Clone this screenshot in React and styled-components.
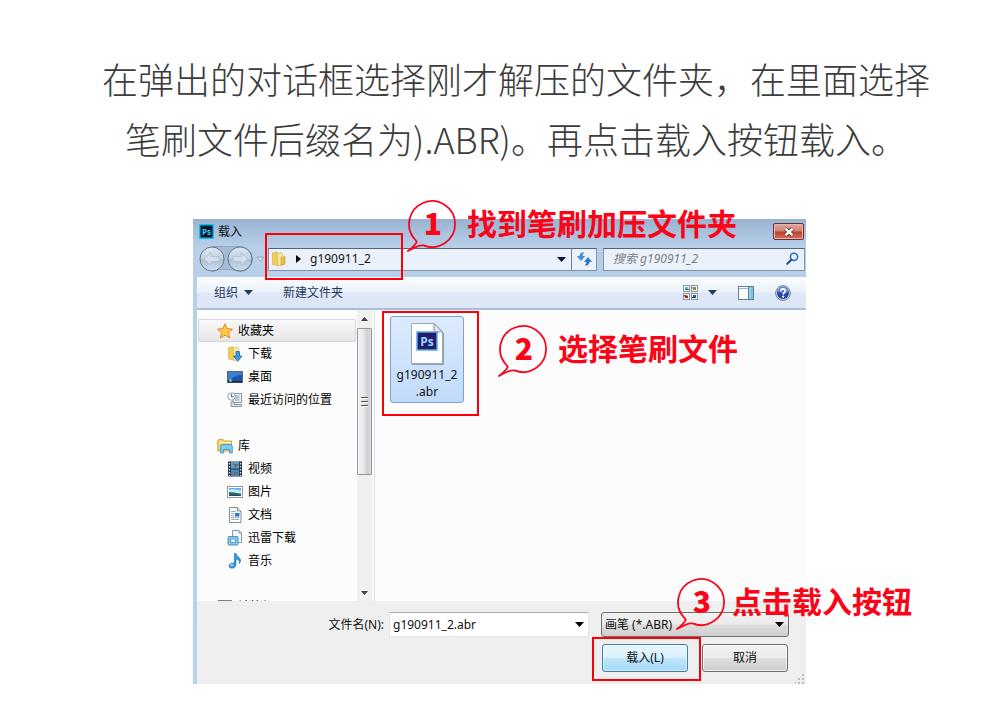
import React from 'react';
import styled, { createGlobalStyle, css } from 'styled-components';

const GlobalStyle = createGlobalStyle`
    *{
        box-sizing: border-box;
    }
    body{
        margin: 0;
        background: #fff;
        font-family: 'Noto Sans', 'Noto Sans CJK SC', sans-serif;
        font-size: 12px;
        line-height: 17px;
        color: #111;
    }
    button, input, select{
        font: inherit;
        color: inherit;
    }
    svg{
        display: block;
        flex: none;
    }
`;

const Arrow = ({ up, color = '#000' }) => (
    <svg width="9" height="5" viewBox="0 0 9 5" aria-hidden="true">
        <path d={up ? 'M0 5L4.5 0L9 5Z' : 'M0 0H9L4.5 5Z'} fill={color} />
    </svg>
);

const PsIcon = () => (
    <svg width="15" height="15" viewBox="0 0 15 15" aria-hidden="true">
        <rect x=".75" y=".75" width="13.5" height="13.5" fill="#06162c" stroke="#12bdf0" strokeWidth="1.5" />
        <text x="7.5" y="10.5" textAnchor="middle" fontFamily="Open Sans" fontWeight="700" fontSize="8" fill="#3cc8f5">Ps</text>
    </svg>
);

const HistoryIcon = () => (
    <svg width="66" height="28" viewBox="0 0 66 28" aria-hidden="true">
        <defs>
            <linearGradient id="orb" x1="0" y1="0" x2="0" y2="1">
                <stop offset="0" stopColor="#dfe9f3" />
                <stop offset=".48" stopColor="#c3d1e0" />
                <stop offset=".52" stopColor="#adc0d4" />
                <stop offset="1" stopColor="#cfe0f1" />
            </linearGradient>
        </defs>
        <path d="M14 1.5H42A12.5 12.5 0 0 1 42 26.5Q28 22 14 26.5Z" fill="#a4bcd6" stroke="#8ea6c0" />
        <circle cx="14" cy="14" r="12" fill="url(#orb)" stroke="#66788d" />
        <circle cx="42" cy="14" r="12" fill="url(#orb)" stroke="#66788d" />
        <path d="M6 14L13 7.500V11.500H21V16.500H13V20.500Z" fill="#d3dfec" stroke="#a9bbce" strokeWidth=".8" />
        <path d="M50 14L43 7.500V11.500H35V16.500H43V20.500Z" fill="#d3dfec" stroke="#a9bbce" strokeWidth=".8" />
        <path d="M59 12H65.500L62.300 16.500Z" fill="#dbe7f4" stroke="#8298b0" strokeWidth=".8" />
    </svg>
);

const FolderIcon = () => (
    <svg width="16" height="16" viewBox="0 0 16 16" aria-hidden="true">
        <path d="M1.500 2L6 1L7 2.500V14.500L1.500 13.500Z" fill="#f0cc58" stroke="#d3ab3c" strokeWidth=".6" />
        <path d="M6 3L10.500 1.500L11.500 3V13.500L7 15Z" fill="#fae89c" stroke="#d6b450" strokeWidth=".6" />
        <path d="M10 6.500L14 5.500V13L10 14.500Z" fill="#e8bd48" stroke="#c29a35" strokeWidth=".6" />
    </svg>
);

const RefreshIcon = () => (
    <svg width="15" height="14" viewBox="0 0 15 14" aria-hidden="true">
        <path d="M6.500 .8Q3 .5 2.800 4.500H.5L4 8.500L7.500 4.500H5.200Q5.200 2.500 6.500 .8Z" fill="#3f95dc" stroke="#1f66ae" strokeWidth=".5" />
        <path d="M8.500 13.200Q12 13.500 12.200 9.500H14.500L11 5.500L7.500 9.500H9.800Q9.800 11.500 8.500 13.200Z" fill="#2d78c4" stroke="#1f5a9c" strokeWidth=".5" />
    </svg>
);

const SearchIcon = () => (
    <svg width="13" height="13" viewBox="0 0 13 13" aria-hidden="true">
        <circle cx="8" cy="4.800" r="3.600" fill="#eef6fd" stroke="#2f72b3" strokeWidth="1.600" />
        <path d="M5.300 7.700L1.300 11.700" stroke="#23578f" strokeWidth="2.200" strokeLinecap="round" />
    </svg>
);

const ViewsIcon = () => (
    <svg width="15" height="15" viewBox="0 0 15 15" aria-hidden="true">
        <g fill="#fff" stroke="#8493a5">
            <rect x=".5" y=".5" width="6" height="6" />
            <rect x="8.500" y=".5" width="6" height="6" />
            <rect x=".5" y="8.500" width="6" height="6" />
            <rect x="8.500" y="8.500" width="6" height="6" />
        </g>
        <path d="M2 2H5V4H2Z" fill="#58b3dd" />
        <path d="M2 4H6V5H2Z" fill="#287236" />
        <path d="M9 2H13V5H10Z" fill="#6bac30" />
        <path d="M11 3H13V5H11Z" fill="#c7702d" />
        <path d="M1 10H5V13H2Z" fill="#a32020" />
        <path d="M3 10H5V11H3Z" fill="#e5a028" />
        <path d="M10 10H13V13H10Z" fill="#2459a8" />
        <path d="M9 12H12V13H9Z" fill="#222c46" />
    </svg>
);

const PaneIcon = () => (
    <svg width="16" height="14" viewBox="0 0 16 14" aria-hidden="true">
        <rect x=".5" y=".5" width="15" height="13" fill="#fff" stroke="#5f7f9e" />
        <path d="M1 2.500H10" stroke="#9fb4c8" />
        <rect x="10" y="1" width="5" height="12" fill="#79c1dc" />
        <path d="M10.500 1V13" stroke="#5f7f9e" />
        <path d="M12 2V12" stroke="#b9e3f0" />
    </svg>
);

const HelpIcon = () => (
    <svg width="16" height="16" viewBox="0 0 16 16" aria-hidden="true">
        <circle cx="8" cy="8" r="7.400" fill="#c9d2e2" stroke="#6d7789" strokeWidth=".9" />
        <circle cx="8" cy="8" r="6" fill="#2346a8" />
        <path d="M2.500 7A5.500 5.500 0 0 1 13.500 7Q8 9 2.500 7Z" fill="#5d83d4" />
        <path d="M5.600 6.100Q5.700 3.900 8 3.900Q10.400 3.900 10.400 5.900Q10.400 7 9.200 7.700Q8.200 8.300 8.200 9.500" fill="none" stroke="#fff" strokeWidth="1.700" />
        <circle cx="8.200" cy="11.700" r="1.100" fill="#fff" />
    </svg>
);

const icons = {
    star: (
        <path d="M8 .8L10.200 5.600L15.400 6.200L11.500 9.700L12.600 14.900L8 12.200L3.400 14.900L4.500 9.700L.6 6.200L5.800 5.600Z" fill="#fdcb40" stroke="#e4812a" strokeLinejoin="round" />
    ),
    download: (
        <>
            <path d="M1.500 1.500L6 .8L7 2V14L1.500 13Z" fill="#f0cc58" stroke="#d3ab3c" strokeWidth=".6" />
            <path d="M6 2.500L10.500 1L11.500 2.500V13.500L7 15Z" fill="#fae89c" stroke="#d6b450" strokeWidth=".6" />
            <path d="M9 5.500H12.500V10H15L10.800 15.300L6.500 10H9Z" fill="#3a9be4" stroke="#1c66b4" strokeWidth=".8" />
        </>
    ),
    desktop: (
        <>
            <rect x=".5" y="2.500" width="15" height="11" fill="#1e55a8" stroke="#51667f" />
            <path d="M1 3H15V6Q7 6 4 11H1Z" fill="#3f7dce" />
            <path d="M1 12H15V13.500H1Z" fill="#16294c" />
            <circle cx="3.500" cy="11.500" r="1.500" fill="#54c7a8" />
        </>
    ),
    recent: (
        <>
            <path d="M6 1.500H14.500V10.500H6Z" fill="#eef3f7" stroke="#8b959f" />
            <path d="M8 4H12.500M8 6H12.500M8 8H12.500" stroke="#829cb5" />
            <path d="M9.500 3V9M11.500 3V9" stroke="#b7cad9" strokeWidth=".7" />
            <circle cx="4.500" cy="4.500" r="3.800" fill="#f5f7f9" stroke="#9aa5b0" />
            <path d="M4.500 2V4.800H6.500" fill="none" stroke="#536375" />
            <path d="M4 10V14.500H14.500V12.500H7V10Z" fill="#dfe5e9" stroke="#8b959f" />
        </>
    ),
    library: (
        <>
            <path d="M.8 13V2.500L2 1.500H6L7 3H14.500V13Z" fill="#f2d566" stroke="#cfa93f" />
            <path d="M2 4.500H14" stroke="#fff6cc" />
            <path d="M3.500 15V8.500Q3.500 6.500 5.500 6.500H13Q15.300 6.500 15.300 8.500V15H12.500V11.500H6.500V15Z" fill="#80caee" stroke="#3c8dbd" strokeWidth=".8" />
        </>
    ),
    video: (
        <>
            <rect x="1" y=".5" width="14" height="15" fill="#27333c" />
            <rect x="4" y="1" width="8" height="6.500" fill="#4fa7d9" />
            <rect x="4" y="8.500" width="8" height="6.500" fill="#4089c5" />
            <path d="M5 1L8 3.500L11.500 2.500V4L8 6.500ZM4 15L8 10.500L11 12V13L8 12.500Z" fill="#8a5a5a" />
            <path d="M2.500 2V15M13.500 2V15" stroke="#dbe4e9" strokeWidth="1.300" strokeDasharray="1.5 1.5" />
        </>
    ),
    picture: (
        <>
            <rect x=".5" y="2.500" width="15" height="11" fill="#fff" stroke="#8f9ba6" />
            <rect x="2" y="4" width="12" height="8" fill="#5fb7e6" />
            <path d="M2 6Q7 4 14 7V9H2Z" fill="#d0ebf4" />
            <path d="M2 8Q7 8 14 10V12H2Z" fill="#287257" />
            <path d="M2 10.500Q8 10 14 11.500V12H2Z" fill="#1b4c72" />
        </>
    ),
    document: (
        <>
            <path d="M2.500 .5H10.500L14 4V15.500H2.500Z" fill="#fff" stroke="#818c96" />
            <path d="M10.500 .5V4H14" fill="#dfe6ec" stroke="#818c96" />
            <path d="M4 4.500H9M4 6.500H7M4 8.500H7M4 10.500H12M4 12.500H12" stroke="#9bafc0" />
            <rect x="8" y="6" width="4.500" height="3.500" fill="#2e79bd" />
        </>
    ),
    thunder: (
        <>
            <path d="M5.500 .5H12L14.500 3V12.500H5.500Z" fill="#f3f8fc" stroke="#8798a8" />
            <path d="M12 .5V3H14.500" fill="none" stroke="#8798a8" />
            <rect x="1" y="6.500" width="10" height="8.500" rx="1" fill="#8ec8ec" stroke="#4a8fc4" />
            <rect x="3.500" y="9" width="5" height="3.500" fill="#e2f2fc" stroke="#4a8fc4" strokeWidth=".8" />
        </>
    ),
    music: (
        <>
            <path d="M7.500 .5H9Q9.500 3 12 4.500Q15 7 12.500 10.500Q13 6.500 9 6V12Q8.500 15 5 15.300Q1.500 15 2 12Q3 9.500 7.500 10Z" fill="#2f9ae0" stroke="#1767ab" strokeWidth=".6" />
            <ellipse cx="4.800" cy="12" rx="1.800" ry="1.200" fill="#8dd2f6" />
        </>
    ),
    computer: (
        <>
            <rect x="1.500" y="1.500" width="13" height="10" fill="#b9c4cd" stroke="#77818a" />
            <path d="M5 14.500H11" stroke="#77818a" strokeWidth="2" />
        </>
    ),
};

const AbrIcon = () => (
    <svg width="34" height="43" viewBox="0 0 34 43" aria-hidden="true">
        <path d="M1.500 1.500H24L32.500 10V41.500H1.500Z" fill="#fff" stroke="#a0a6ad" />
        <path d="M24 1.500V10H32.500Z" fill="#e2e5e9" stroke="#8d949c" />
        <path d="M33.500 11V42.500H2" fill="none" stroke="#8f9fb2" />
        <rect x="7" y="10" width="20" height="18" fill="#211d68" stroke="#5aa9ee" strokeWidth="1.500" />
        <text x="17" y="23.500" textAnchor="middle" fontFamily="Open Sans" fontWeight="700" fontSize="12" fill="#9bd1ff">Ps</text>
    </svg>
);

const places = [
    {
        label: '收藏夹', icon: 'star', active: true,
        items: [
            { label: '下载', icon: 'download' },
            { label: '桌面', icon: 'desktop' },
            { label: '最近访问的位置', icon: 'recent' },
        ],
    },
    {
        label: '库', icon: 'library',
        items: [
            { label: '视频', icon: 'video' },
            { label: '图片', icon: 'picture' },
            { label: '文档', icon: 'document' },
            { label: '迅雷下载', icon: 'thunder' },
            { label: '音乐', icon: 'music' },
        ],
    },
    { label: '计算机', icon: 'computer', items: [] },
];

const PlaceIcon = ({ name }) => (
    <svg width="16" height="16" viewBox="0 0 16 16" aria-hidden="true">{icons[name]}</svg>
);

const Step = ({ number, children, ...place }) => (
    <Callout {...place}>
        <Bubble>
            <svg width="52" height="54" viewBox="0 0 52 54" aria-hidden="true">
                <path d="M9.500 41A23 23 0 1 1 17.500 46.400Q13 45.500 2 52Q9.500 46 10.800 43Z" fill="none" stroke="#f8061c" strokeWidth="1.800" strokeLinejoin="round" />
            </svg>
            <b>{number}</b>
        </Bubble>
        {children}
    </Callout>
);

function App() {
    return (
        <Page>
            <GlobalStyle />
            <Intro>
                在弹出的对话框选择刚才解压的文件夹，在里面选择<br />
                笔刷文件后缀名为).ABR)。再点击载入按钮载入。
            </Intro>
            <Dialog>
                <TitleBar>
                    <PsIcon />
                    <h2>载入</h2>
                    <CloseButton type="button" aria-label="关闭">
                        <svg width="12" height="10" viewBox="0 0 12 10" aria-hidden="true">
                            <path d="M2.500 1.800L9.500 8.200M9.500 1.800L2.500 8.200" stroke="#5b3a3c" strokeWidth="4" />
                            <path d="M2.500 1.800L9.500 8.200M9.500 1.800L2.500 8.200" stroke="#fff" strokeWidth="2.400" />
                        </svg>
                    </CloseButton>
                </TitleBar>
                <NavBar>
                    <HistoryIcon />
                    <Address>
                        <Crumb type="button">
                            <FolderIcon />
                            <svg width="5" height="8" viewBox="0 0 5 8" aria-hidden="true"><path d="M0 0L5 4L0 8Z" /></svg>
                            g190911_2
                        </Crumb>
                        <DropButton type="button" aria-label="以前的位置"><Arrow color="#0b1240" /></DropButton>
                        <RefreshButton type="button" aria-label="刷新"><RefreshIcon /></RefreshButton>
                    </Address>
                    <Search>
                        <input type="search" placeholder="搜索 g190911_2" aria-label="搜索" />
                        <SearchIcon />
                    </Search>
                </NavBar>
                <Toolbar>
                    <ToolButton type="button">组织 <Arrow color="#1e3a66" /></ToolButton>
                    <ToolButton type="button">新建文件夹</ToolButton>
                    <Tools>
                        <ToolButton type="button" aria-label="更改视图"><ViewsIcon /></ToolButton>
                        <ToolButton type="button" aria-label="更多选项"><Arrow color="#1e3a66" /></ToolButton>
                        <ToolButton type="button" aria-label="预览窗格"><PaneIcon /></ToolButton>
                        <ToolButton type="button" aria-label="帮助"><HelpIcon /></ToolButton>
                    </Tools>
                </Toolbar>
                <Body>
                    <Sidebar>
                        {places.map((group) => (
                            <PlaceGroup key={group.label}>
                                <Place href="#" $active={group.active}>
                                    <PlaceIcon name={group.icon} />{group.label}
                                </Place>
                                {group.items.map((item) => (
                                    <Place key={item.label} href="#" $nested>
                                        <PlaceIcon name={item.icon} />{item.label}
                                    </Place>
                                ))}
                            </PlaceGroup>
                        ))}
                    </Sidebar>
                    <ScrollBar>
                        <Arrow up color="#444" />
                        <Thumb><i /><i /><i /></Thumb>
                        <Arrow color="#444" />
                    </ScrollBar>
                    <Files>
                        <FileTile type="button">
                            <AbrIcon />
                            <span>g190911_2<br />.abr</span>
                        </FileTile>
                    </Files>
                </Body>
                <Footer>
                    <Fields>
                        <label htmlFor="filename">文件名(N):</label>
                        <FileName>
                            <input id="filename" type="text" defaultValue="g190911_2.abr" />
                            <Arrow />
                        </FileName>
                        <FileType>
                            <select aria-label="文件类型" defaultValue="abr">
                                <option value="abr">画笔 (*.ABR)</option>
                            </select>
                            <Arrow />
                        </FileType>
                    </Fields>
                    <Actions>
                        <ActionButton type="button" $primary>载入(L)</ActionButton>
                        <ActionButton type="button">取消</ActionButton>
                    </Actions>
                    <Grip width="10" height="10" viewBox="0 0 10 10" aria-hidden="true">
                        <path d="M7 0H9V2H7ZM7 4H9V6H7ZM3 4H5V6H3ZM7 8H9V10H7ZM3 8H5V10H3ZM0 8H1V10H0Z" fill="#bdbdbd" />
                    </Grip>
                </Footer>
                <Frame $left={72} $top={14} $width={138} $height={47} />
                <Frame $left={189} $top={92} $width={97} $height={105} />
                <Frame $left={399} $top={418} $width={109} $height={44} />
                <Step number="1" $left={213} $top={-20}>找到笔刷加压文件夹</Step>
                <Step number="2" $left={304} $top={105}>选择笔刷文件</Step>
                <Step number="3" $left={482} $top={358} $tight>点击载入按钮</Step>
            </Dialog>
        </Page>
    );
}

const Page = styled.main`
    padding: 48px 1px 38px 0;
`;

const Intro = styled.h1`
    margin: 0 0 51px;
    padding-left: 33px;
    text-align: center;
    font-family: 'Noto Sans CJK SC', sans-serif;
    font-size: 36px;
    font-weight: 300;
    line-height: 60px;
    color: #3c3c3c;
`;

const Dialog = styled.section`
    position: relative;
    max-width: 613px;
    margin: 0 auto;
    background: linear-gradient(#98b3d1, #b8cfe9 28px, #b9d1ec);
`;

const TitleBar = styled.header`
    display: flex;
    align-items: center;
    gap: 4px;
    height: 25px;
    padding: 0 2px 0 6px;

    h2{
        flex: 1;
        margin: 0;
        font-size: 12px;
        font-weight: 400;
    }
`;

const CloseButton = styled.button`
    display: flex;
    align-items: center;
    justify-content: center;
    width: 31px;
    height: 17px;
    padding: 0;
    border: 1px solid #6b2f33;
    border-radius: 2px;
    background: linear-gradient(#e2aaa0, #d07f72 48%, #b8412e 52%, #d4705a);
    box-shadow: inset 0 0 0 1px #e6b5ac;
`;

const NavBar = styled.div`
    display: flex;
    align-items: center;
    height: 33px;
    padding: 0 1px 3px 5px;
`;

const field = css`
    display: flex;
    align-items: center;
    height: 23px;
    border: 1px solid #8294aa;
    border-top-color: #566375;
    background: #eaf1fa;
`;

const Address = styled.div`
    ${field}
    flex: 1;
    margin-left: 4px;
`;

const Crumb = styled.button`
    display: flex;
    flex: 1;
    align-items: center;
    gap: 9px;
    padding: 0 0 1px 2px;
    border: 0;
    background: none;
`;

const DropButton = styled.button`
    padding: 0 5px;
    border: 0;
    background: none;
`;

const RefreshButton = styled.button`
    display: flex;
    align-items: center;
    justify-content: center;
    align-self: stretch;
    width: 25px;
    padding: 0;
    border: 0;
    border-left: 1px solid #72839a;
    background: none;
`;

const Search = styled.div`
    ${field}
    width: 202px;
    margin-left: 6px;
    padding: 0 5px 1px 9px;

    input{
        flex: 1;
        min-width: 0;
        padding: 0;
        border: 0;
        outline: 0;
        background: none;
        font-style: italic;
    }
    input::placeholder{
        color: #7b8088;
    }
`;

const Toolbar = styled.div`
    display: flex;
    align-items: center;
    gap: 30px;
    height: 33px;
    margin-left: 4px;
    padding: 0 15px 0 17px;
    border-bottom: 2px solid #a9bdd5;
    background: linear-gradient(#fbfdff, #eaf1fa 50%, #dde7f5 52%, #dce6f5);
    color: #1e395b;
`;

const ToolButton = styled.button`
    display: flex;
    align-items: center;
    gap: 6px;
    padding: 0;
    border: 0;
    background: none;
`;

const Tools = styled.div`
    display: flex;
    align-items: center;
    gap: 21px;
    margin-left: auto;

    button:first-child{
        margin-right: -11px;
    }
`;

const Body = styled.div`
    display: flex;
    height: 291px;
    margin-left: 4px;
    background: #fcfcfc;
`;

const Sidebar = styled.nav`
    width: 160px;
    padding: 9px 1px 0;
    overflow: hidden;
`;

const PlaceGroup = styled.div`
    margin-bottom: 23px;
`;

const Place = styled.a`
    display: flex;
    align-items: center;
    gap: 5px;
    height: 23px;
    padding-left: ${(props) => (props.$nested ? '28px' : '18px')};
    border: 1px solid transparent;
    border-radius: 2px;
    color: #000;
    text-decoration: none;

    ${(props) => props.$active && css`
        border-color: #d6d6d6;
        background: linear-gradient(#f9f9f9, #e6e6e6);
    `}
`;

const ScrollBar = styled.div`
    display: flex;
    flex-direction: column;
    align-items: center;
    width: 15px;
    padding: 7px 0 6px;
    background: #f0f0f0;

    > svg:last-child{
        margin-top: auto;
    }
    > svg{
        width: 7px;
        height: 4px;
    }
`;

const Thumb = styled.div`
    display: flex;
    flex-direction: column;
    align-items: center;
    justify-content: center;
    gap: 2px;
    width: 15px;
    height: 147px;
    margin-top: 7px;
    border: 1px solid #979797;
    border-radius: 1px;
    background: linear-gradient(90deg, #f5f5f5, #e6e6e8 45%, #cfcfd5 70%, #dcdce0);

    i{
        width: 7px;
        height: 2px;
        border-top: 1px solid #555;
        background: #fff;
    }
`;

const Files = styled.div`
    flex: 1;
    margin-left: 2px;
    padding: 6px 15px;
    border-left: 1px solid #d3e1f1;
`;

const FileTile = styled.button`
    display: flex;
    flex-direction: column;
    align-items: center;
    gap: 1px;
    width: 74px;
    height: 87px;
    padding: 5px 0 0;
    border: 1px solid #7da2ce;
    border-radius: 3px;
    background: linear-gradient(#dcebfc, #c1dbfc);
`;

const Footer = styled.footer`
    position: relative;
    margin-left: 4px;
    padding: 11px 17px 12px;
    background: #efefef;
`;

const Fields = styled.div`
    display: flex;
    align-items: center;
    justify-content: flex-end;

    > div{
        display: flex;
        align-items: center;
        height: 25px;
        padding-right: 4px;
    }
    input, select{
        flex: 1;
        min-width: 0;
        height: 23px;
        padding: 0 3px;
        border: 0;
        outline: 0;
        background: none;
        appearance: none;
    }
`;

const FileName = styled.div`
    width: 200px;
    margin: 0 12px 0 5px;
    border: 1px solid #e2e3ea;
    border-top-color: #abadb3;
    background: #fff;
`;

const FileType = styled.div`
    width: 188px;
    border: 1px solid #707070;
    border-radius: 3px;
    background: linear-gradient(#f2f2f2, #ebebeb 48%, #dddddd 52%, #cfcfcf);
`;

const Actions = styled.div`
    display: flex;
    justify-content: flex-end;
    gap: 14px;
    margin-top: 7px;
    padding-right: 1px;
`;

const ActionButton = styled.button`
    width: 86px;
    height: 28px;
    padding: 0 0 2px;
    border: 1px solid ${(props) => (props.$primary ? '#3c7fb1' : '#707070')};
    border-radius: 3px;
    background: ${(props) => (props.$primary
        ? 'linear-gradient(#eaf6fd, #d9f0fc 48%, #bee6fd 52%, #a7d9f5)'
        : 'linear-gradient(#f2f2f2, #ebebeb 48%, #dddddd 52%, #cfcfcf)')};
    box-shadow: inset 0 0 0 1px rgba(255, 255, 255, .6);
`;

const Grip = styled.svg`
    position: absolute;
    right: 1px;
    bottom: 0;
`;

const Frame = styled.div`
    position: absolute;
    left: ${(props) => props.$left}px;
    top: ${(props) => props.$top}px;
    width: ${(props) => props.$width}px;
    height: ${(props) => props.$height}px;
    border: 2px solid #fb0007;
    pointer-events: none;
`;

const Callout = styled.div`
    position: absolute;
    left: ${(props) => props.$left}px;
    top: ${(props) => props.$top}px;
    display: flex;
    gap: ${(props) => (props.$tight ? '5px' : '9px')};
    font-family: 'Noto Sans CJK SC', sans-serif;
    font-size: 30px;
    font-weight: 700;
    line-height: 46px;
    white-space: nowrap;
    color: #fb0418;
    pointer-events: none;
`;

const Bubble = styled.div`
    display: grid;

    svg, b{
        grid-area: 1 / 1;
    }
    b{
        padding-left: 2px;
        text-align: center;
    }
`;

export default App;
